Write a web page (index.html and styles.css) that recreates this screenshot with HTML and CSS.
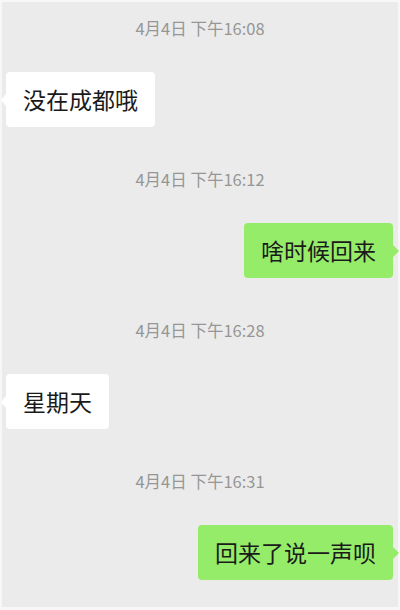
FILE: index.html
```html
<!DOCTYPE html>
<html lang="zh-CN">
<head>
    <meta charset="UTF-8">
    <meta name="viewport" content="width=device-width, initial-scale=1.0">
    <title>聊天记录</title>
    <link rel="stylesheet" href="styles.css">
</head>
<body>

<div class="chat">
    <div class="group">
        <div class="time">4月4日 下午16:08</div>
        <div class="row left">
            <div class="bubble">没在成都哦</div>
        </div>
    </div>

    <div class="group">
        <div class="time">4月4日 下午16:12</div>
        <div class="row right">
            <div class="bubble">啥时候回来</div>
        </div>
    </div>

    <div class="group">
        <div class="time">4月4日 下午16:28</div>
        <div class="row left">
            <div class="bubble">星期天</div>
        </div>
    </div>

    <div class="group">
        <div class="time">4月4日 下午16:31</div>
        <div class="row right">
            <div class="bubble">回来了说一声呗</div>
        </div>
    </div>
</div>

</body>
</html>
```

FILE: styles.css
```css
html, body {
    margin: 0;
    padding: 0;
}
body {
    font-family: "Noto Sans CJK SC", "Noto Sans", sans-serif;
    background-color: #fafafa;
}
.chat {
    box-sizing: border-box;
    height: 610px;
    border: 2px solid #f7f7f7;
    border-bottom-width: 3px;
    background-color: #ebebeb;
    padding-top: 16px;
}
.group {
    margin-bottom: 42px;
}
.time {
    text-align: center;
    font-size: 16.5px;
    line-height: 20px;
    color: #969696;
    margin-bottom: 34px;
}
.row {
    display: flex;
}
.row.left {
    justify-content: flex-start;
    padding-left: 4px;
}
.row.right {
    justify-content: flex-end;
    padding-right: 5px;
}
.bubble {
    position: relative;
    font-size: 23px;
    line-height: 31px;
    padding: 12px 17px;
    border-radius: 4px;
    color: #1a1a1a;
}
.left .bubble {
    background-color: #ffffff;
}
.right .bubble {
    background-color: #95ec69;
}
.bubble::before {
    content: "";
    position: absolute;
    top: 50%;
    margin-top: -6px;
    border-top: 6px solid transparent;
    border-bottom: 6px solid transparent;
}
.left .bubble::before {
    left: -5px;
    border-right: 5px solid #ffffff;
}
.right .bubble::before {
    right: -6px;
    border-left: 6px solid #95ec69;
}
```
